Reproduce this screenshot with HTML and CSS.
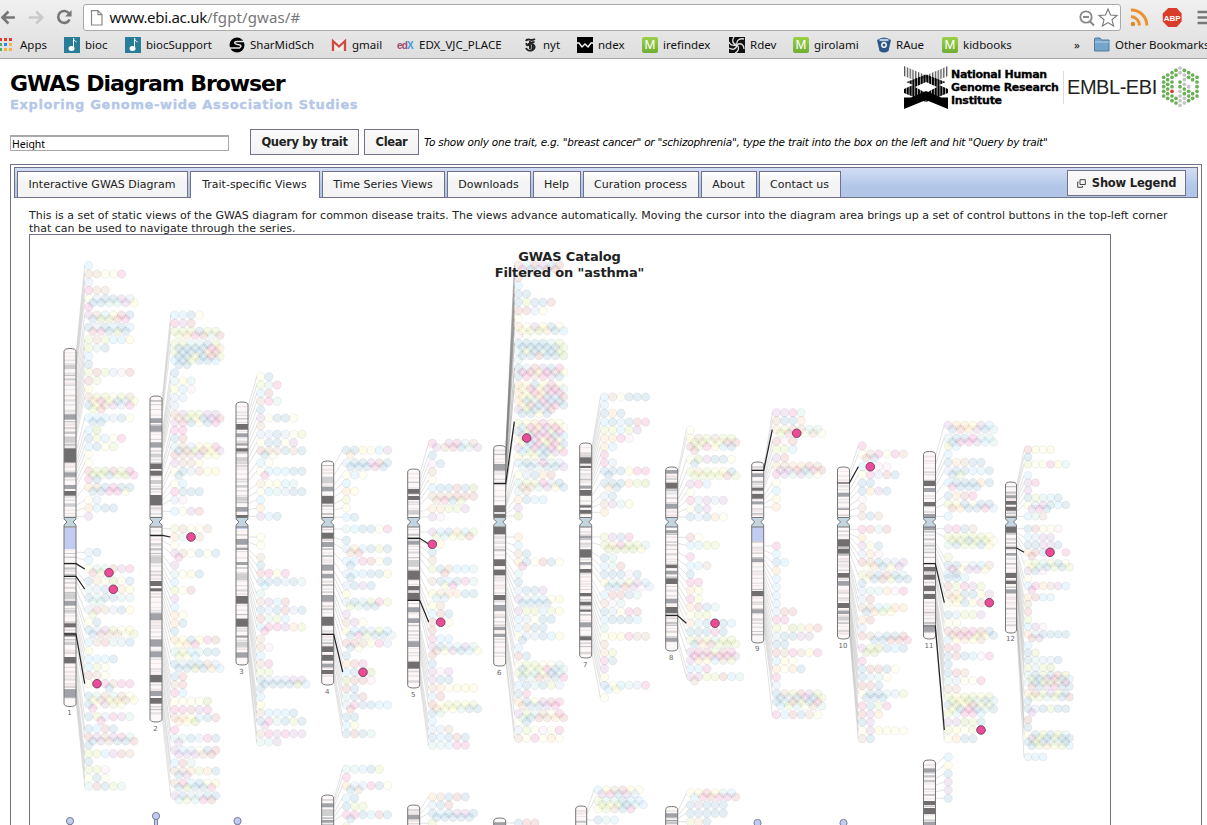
FILE: index.html
```html
<!DOCTYPE html>
<html lang="en">
<head>
<meta charset="utf-8">
<title>GWAS Diagram Browser</title>
<link rel="stylesheet" href="styles.css">
</head>
<body>
<div class="chrome">
  <div class="nav">
    <svg class="nav-icons" width="83" height="34" viewBox="0 0 83 34" fill="none">
      <path d="M15 17.500H3M8.500 11.500L2.500 17.500L8.500 23.500" stroke="#767676" stroke-width="2.600"/>
      <path d="M29 17.500H42M36.500 11.500L42.500 17.500L36.500 23.500" stroke="#cbcbcb" stroke-width="2.600"/>
      <path d="M69.500 13.500A6 6 0 1 0 70 19.500" stroke="#767676" stroke-width="2.600"/>
      <path d="M72 10V16.500H65.500Z" fill="#767676"/>
    </svg>
    <div class="address">
      <svg width="14" height="16" viewBox="0 0 14 16"><path d="M1.500 .7H8L12 4.700V15H1.500ZM8 .7V4.700H12" fill="#fff" stroke="#888" stroke-width="1.200"/></svg>
      <span class="url">www.ebi.ac.uk<span class="path">/fgpt/gwas/#</span></span>
      <svg class="addr-icons" width="42" height="22" viewBox="0 0 42 22" fill="none" stroke="#888">
        <circle cx="9" cy="10" r="5.700" stroke-width="1.800"/><path d="M6 10H12M13 14.500L17 18.500" stroke-width="2"/>
        <path d="M31 2L33.500 8L40 8.500L35 12.800L36.600 19L31 15.600L25.400 19L27 12.800L22 8.500L28.500 8Z" stroke="#777" stroke-width="1.100"/>
      </svg>
    </div>
    <svg width="87" height="34" viewBox="0 0 87 34" fill="none">
      <g stroke="#ee9231" stroke-width="3"><path d="M10 16.500A9 9 0 0 1 18.500 25.500M10 10A15.500 15.500 0 0 1 26 25.500"/></g><circle cx="12" cy="24" r="2.200" fill="#e88420"/>
      <path d="M47.500 8H56L61 13.500V21.500L56 27H47.500L42 21.500V13.500Z" fill="#d93c2b"/>
      <text x="51.500" y="20.700" class="abp">ABP</text>
      <path d="M77 12H87M77 17.500H87M77 23H87" stroke="#777" stroke-width="2.400"/>
    </svg>
  </div>
  <div class="bookmarks">
    <span class="bm"><svg width="15" height="16" viewBox="1 0 15 16"><path fill="#e5392f" d="M0 1h3v3H0zM5 1h3v3H5zM10 1h3v3h-3z"/><path fill="#4caf60" d="M0 6h3v3H0z"/><path fill="#2e86e8" d="M5 6h3v3H5z"/><path fill="#f2b33c" d="M10 6h3v3h-3zM5 11h3v3H5zM10 11h3v3h-3z"/><path fill="#4caf60" d="M0 11h3v3H0z"/></svg>Apps</span>
    <span class="bm"><svg width="16" height="16" viewBox="0 0 16 16"><path fill="#287d99" d="M0 0h16v16H0z"/><ellipse cx="7.500" cy="11.500" rx="3" ry="2.500" fill="#fff"/><path d="M9.500 12V1C10 4 11 4 12.500 5" stroke="#fff" fill="none"/></svg>bioc</span>
    <span class="bm"><svg width="16" height="16" viewBox="0 0 16 16"><path fill="#287d99" d="M0 0h16v16H0z"/><ellipse cx="7.500" cy="11.500" rx="3" ry="2.500" fill="#fff"/><path d="M9.500 12V1C10 4 11 4 12.500 5" stroke="#fff" fill="none"/></svg>biocSupport</span>
    <span class="bm"><svg width="16" height="16" viewBox="0 0 16 16"><circle cx="8" cy="8" r="7.500"/><path d="M16 4.500H8Q5 4.500 6 6.500Q7 7.500 11 8Q13 9 10.500 11H0" stroke="#e8e8e8" stroke-width="1.500" fill="none"/></svg>SharMidSch</span>
    <span class="bm"><svg width="16" height="16" viewBox="0 0 16 16"><path d="M1 3H15V14H1Z" fill="#eee"/><path d="M2 14V4L8 9.500L14 4V14" fill="none" stroke="#d04c40" stroke-width="2.300"/></svg>gmail</span>
    <span class="bm"><svg width="17" height="16" viewBox="0 0 17 16"><text x="0" y="12" class="edx">ed<tspan fill="#3a9ee0">X</tspan></text></svg>EDX_VJC_PLACE</span>
    <span class="bm"><svg width="14" height="16" viewBox="0 0 14 16" fill="none" stroke="#222"><path d="M2 4C3 0 7 5 11 2M2.500 6C2 9 5 9 5 6M10.500 5C6 5 7 7 10 8M10 8C13 13 4 16 2 11M6 4V12M8.500 7V12" stroke-width="1.900"/></svg>nyt</span>
    <span class="bm"><svg width="16" height="16" viewBox="0 0 16 16"><path d="M0 0h16v16H0z"/><path d="M0 6H2L5 10L8 7L11 10L14 6H16" fill="none" stroke="#fff" stroke-width="1.300"/></svg>ndex</span>
    <span class="bm"><span class="m-icon">M</span>irefindex</span>
    <span class="bm"><svg width="16" height="16" viewBox="0 0 16 16"><path fill="#111" d="M0 0h16v16H0z"/><g fill="none" stroke="#ddd" stroke-width="1.300"><path d="M8 8C3 7 3 3 5 0M8 8C7 3 11 1 15 2M8 8C12 5 15 8 15 12M8 8C11 11 9 15 6 16M8 8C7 13 3 13 0 11M8 8C4 9 1 8 0 5"/></g></svg>Rdev</span>
    <span class="bm"><span class="m-icon">M</span>girolami</span>
    <span class="bm"><svg width="14" height="16" viewBox="0 0 14 16"><path d="M0 3Q7 -2 14 3L11.500 14Q7 17 2.500 14Z" fill="#2c5688"/><ellipse cx="7" cy="3" rx="5" ry="1.300" fill="#b9cbe0"/><circle cx="7" cy="8" r="2.200" fill="#2c5688" stroke="#fff" stroke-width="1.400"/></svg>RAue</span>
    <span class="bm"><span class="m-icon">M</span>kidbooks</span>
    <span class="bm">»</span>
    <span class="bm other"><svg width="16" height="16" viewBox="0 0 16 16"><path d="M.5 2Q.5 1 2 1H6L7.500 3H15V14H.5Z" fill="#75a5ca" stroke="#4f7ba0"/><path d="M1 5H15" stroke="#b9d4e8"/></svg>Other Bookmarks</span>
  </div>
</div>

<header class="header">
  <div>
    <h1>GWAS Diagram Browser</h1>
    <p class="tagline">Exploring Genome-wide Association Studies</p>
  </div>
  <div class="logos">
    <svg width="44" height="44" viewBox="0 0 44 44">
      <defs><pattern id="fine" width="2.800" height="4" patternUnits="userSpaceOnUse"><path d="M0 0h1.300v4H0z" fill="#555"/></pattern>
      <pattern id="thick" width="2.800" height="4" patternUnits="userSpaceOnUse"><path d="M0 0h2.200v4H0z"/></pattern></defs>
      <path d="M0 0L26 11L12 15L0 10Z" fill="url(#fine)"/><path d="M44 0L18 11L32 15L44 10Z" fill="url(#fine)"/>
      <path d="M0 17L22 8.500L44 17V27L22 36L0 27ZM11 21L22 27L33 21L22 16Z" fill="url(#thick)" fill-rule="evenodd"/>
      <path d="M0 15L9 19L0 23ZM44 15L35 19L44 23Z" fill="#fff"/>
      <path d="M0 31H8L22 25L36 31H44V43L22 34L0 43Z" fill="#000"/><path d="M0 28L8 31.500H0ZM44 28L36 31.500H44Z" fill="#fff"/>
    </svg>
    <strong class="nhgri">National Human<br>Genome Research<br>Institute</strong>
    <span class="embl">EMBL-EBI</span>
    <svg id="hex" width="42" height="44" viewBox="1087 200 126 132"></svg>
  </div>
</header>

<form class="query">
  <input class="trait" value="Height">
  <button type="button" class="btn btn-query">Query by trait</button>
  <button type="button" class="btn btn-clear">Clear</button>
  <em class="hint">To show only one trait, e.g. "breast cancer" or "schizophrenia", type the trait into the box on the left and hit "Query by trait"</em>
</form>

<main class="panel">
  <nav class="tabs">
    <a class="tab t1"><span>Interactive GWAS Diagram</span></a>
    <a class="tab t2 active"><span>Trait-specific Views</span></a>
    <a class="tab t3"><span>Time Series Views</span></a>
    <a class="tab t4"><span>Downloads</span></a>
    <a class="tab t5"><span>Help</span></a>
    <a class="tab t6"><span>Curation process</span></a>
    <a class="tab t7"><span>About</span></a>
    <a class="tab t8"><span>Contact us</span></a>
    <button type="button" class="btn legend"><svg width="9" height="9" viewBox="0 0 9 9" fill="none" stroke="#444"><path d="M3 .7H8.300V5.500H3ZM1.500 3H.7V8.300H5.500V7"/></svg>Show Legend</button>
  </nav>
  <p class="intro">This is a set of static views of the GWAS diagram for common disease traits. The views advance automatically. Moving the cursor into the diagram area brings up a set of control buttons in the top-left corner<br>that can be used to navigate through the series.</p>
  <div class="diagram"><svg id="map" width="1080" height="590" viewBox="30 235 1080 590"></svg></div>
</main>
<script src="diagram.js"></script>
</body>
</html>
```
FILE: styles.css
```css
* { box-sizing: border-box; }
body { margin: 0; height: 825px; overflow: hidden; background: #fff; font-family: "DejaVu Sans", Verdana, sans-serif; color: #222; }
.chrome { height: 59px; border-bottom: 1px solid #a8a8a8; background: linear-gradient(#f0f0f0, #dedede); overflow: hidden; }
.nav { display: flex; height: 34px; }
.address { display: flex; align-items: center; width: 1038px; height: 27px; margin-top: 4px; padding-left: 6px; flex: none; background: #fff; border: 1px solid #aaa; border-radius: 3px; }
.url { margin-left: 6px; margin-top: -2px; font: 15px/24px "Noto Sans", sans-serif; letter-spacing: -.3px; color: #111; }
.path { color: #777; letter-spacing: .1px; }
.addr-icons { margin-left: auto; margin-right: 1px; }
.abp { font: bold 8px "Liberation Sans", sans-serif; fill: #fff; text-anchor: middle; }
.bookmarks { display: grid; grid-template-columns: 64px 61px 104px 102px 66px 127px 53px 65px 87px 64px 84px 65px 132px 20px 130px; font: 11.5px/22px "Noto Sans", sans-serif; color: #111; }
.bm { display: flex; align-items: center; gap: 5px; height: 22px; white-space: nowrap; }
.bm svg { flex: none; }
.other { letter-spacing: -.08px; }
.edx { font: bold 10px "Liberation Sans", sans-serif; fill: #9c4a70; letter-spacing: -.8px; }
.m-icon { width: 16px; height: 16px; border-radius: 2px; background: linear-gradient(#9bd046, #6fad33); color: #fff; font: 13px/16px "Liberation Sans", sans-serif; text-align: center; }
.header { display: flex; justify-content: space-between; height: 69px; padding: 7px 4px 0 10px; }
h1 { margin: 4px 0 0; font-size: 22px; line-height: 28px; letter-spacing: -1.1px; color: #000; }
.tagline { margin: 0; font-size: 13px; line-height: 14px; font-weight: bold; letter-spacing: .63px; color: #b4c7e9; -webkit-text-stroke: .3px #b4c7e9; }
.logos { display: flex; align-items: flex-start; }
.nhgri { width: 112px; margin-left: 3px; padding-top: 2px; font: 900 11px/13px "DejaVu Sans", sans-serif; letter-spacing: -.28px; color: #000; white-space: nowrap; -webkit-text-stroke: .3px #000; }
.embl { width: 98px; height: 33px; margin-top: 5px; padding-left: 3px; border-left: 1px solid #ddd; font: 20px/33px "Liberation Sans", sans-serif; letter-spacing: -.45px; color: #222; }
.query { display: flex; align-items: center; height: 28px; padding-left: 10px; }
.trait { width: 219px; height: 16px; margin: 2px 21px 0 0; padding: 0 1px; border: 1px solid #aaa; border-top: 2px solid #aaa; font: 10.500px "Noto Sans", sans-serif; color: #000; }
.btn { height: 26px; padding: 0; border: 1px solid #71718a; background: linear-gradient(#fafafa, #f3f3f3); font: bold 11.500px "DejaVu Sans", sans-serif; letter-spacing: -.2px; color: #222; }
.btn-query, .btn-clear { margin-bottom: 1px; letter-spacing: -.35px; }
.btn-query { width: 109px; margin-right: 5px; }
.btn-clear { width: 55px; }
.hint { margin-left: 5px; font-size: 10.500px; letter-spacing: -.235px; color: #000; white-space: nowrap; }
.panel { width: 1192px; height: 670px; margin: 8px 0 0 10px; padding: 2px 3px 0 3px; border: 1px solid #71718a; }
.tabs { display: flex; align-items: flex-end; gap: 2px; height: 31px; padding-left: 2px; border: 1px solid #71718a; background: linear-gradient(#d3def4, #b2c6e8 65%); }
.tab { display: flex; justify-content: center; height: 26px; border: 1px solid #71718a; border-bottom: 0; background: linear-gradient(#fff, #f4f4f4 40%); font-size: 11px; line-height: 25px; white-space: nowrap; }
.active { background: #fff; height: 27px; margin-bottom: -1px; line-height: 26px; }
.t1 { width: 171px; } .t2 { width: 130px; } .t3 { width: 123px; } .t4 { width: 84px; } .t5 { width: 48px; } .t6 { width: 116px; } .t7 { width: 56px; } .t8 { width: 82px; }
.tab span { margin-left: -1px; }
.legend { display: flex; align-items: center; justify-content: center; gap: 6px; width: 119px; height: 26px; margin: 0 11px 1px auto; }
.intro { margin: 11px 0 0 15px; font-size: 11px; line-height: 13px; letter-spacing: -.007px; white-space: nowrap; }
.diagram { width: 1082px; height: 592px; margin: -1px 0 0 15px; border: 1px solid #71718a; }
.diagram svg { display: block; }
.label { font: 7px "DejaVu Sans", sans-serif; fill: #666; text-anchor: middle; }
.title { font: bold 13px "DejaVu Sans", sans-serif; letter-spacing: -.15px; fill: #222; text-anchor: middle; }
```
FILE: diagram.js
```javascript
const palette = { b:'#5c9cc0', s:'#7fd0f8', p:'#e0509f', r:'#cc6666', t:'#c9957c', l:'#b678c0', g:'#c0e070', G:'#a0c040', w:'#f6f6b4', y:'#f8f080', o:'#f8b870', m:'#98d8d0', v:'#a0c0e8', k:'#f0c8e0' };

// number: [left, top, bottom, label y, width]
const chromosomes = {
  1:[64,348.5,706.5,715], 2:[150,396,722,731], 3:[236,402,665,674], 4:[321.7,461,685,694], 5:[407.7,469,688,697],
  6:[493.7,445.500,666,675], 7:[579.700,443,658,667], 8:[665.700,467,651,660], 9:[751.700,462,643,651],
  10:[837.500,467,639,648], 11:[923.500,451.500,639,648], 12:[1005.500,482,633,641,11],
  16:[321.7,795,900], 17:[407.7,805,900], 18:[493.7,818,900], 19:[575.7,806,900,0,11], 20:[665.7,806.500,900], 23:[923.500,760,900]
};

// Each section holds bands and trait rows in thirds of a pixel from its origin.
// A slash starts a staggered row half a step lower.
const sections = [
{ o:[30,240],
  bands:{1:'k625-668 k753-767 m523-539 m697-710 m735-747 l375-387 l415-420 l590-608 l790-800', 2:'k671-687 k692-707 k765-796 m535-549 m558-575 m607-623 l641-652 l720-732 l744-750', 3:'k552-569 k625-635 m580-591 m610-617 m801-815 k825-836 l652-665 l735-742 l770-782'},
  rows:{
  1:'77s 102ttwwp 127v 151ptt 176wvbblv/bbmmly/p 225ltsyrb/bGGrp 262bvbsbs/rpbGb 299gtgssy 324gmb 349s 373b 397grgvkr 422rg 447y 471tggwgt/opybvy/bytlvp/gr 534sssvbw/bb 571sG 595bgswp 620sbwg 643w 669w 693rgGrgp/ggbgGp/pb 742otbpbb/bbppy 780wv 804osbb 829l',
  2:'225ssbw 250plr 274gggbgg/goprmr 312ggmmbg/bbbbpo/gbbbor/bbybrg/sbgbbs/bb 398b 423mym 448ysk 473vv 497v 523tlggll/ogyblr/lpbwbp 571pp 595br 620mtvyyp/btgryl/rttlyy 669ltty 694wbvtyy/b 731ws 755pbbb 780vk 814swlr 866gtwwt',
  3:'410wb 435gmp 460sr 484tpm 509b 534lwbbw 558t 583vvbvwg 608wbbwl 632rttbtb/bw 669sw 694wsssbb/p 731owysm 755wsmvbb 780s 804o 829lsb'} },
{ o:[30,530],
  bands:{1:'k280-292 k308-319 k381-400 m213-227 m478-503 l80-84 l190-207 l240-248 l335-345', 2:'k153-168 k175-184 k435-457 k504-521 m250-271 m328-350 m364-382 m483-498 l40-46 l80-100', 3:'m27-44 m96-105 m54-60 k198-221 k266-290 m317-323 m367-383 l130-150 l335-350'},
  rows:{
  1:'67vb 91s 116wmmrlp/rgy 153bowGwb 178mvbkoy 203bmbbmm/mm 240vrtvby/g 276wb 300bvlgwy/brttwg 337strmvb 362y 387sssb 411sgw 436rtw 461wtptpp/__b 498bmtmtw/ytyoty/bwlgy/p 560bgvplm/_p 596bsrb 621rltlpm/bltbbr/b 671ggslrt 695b 719ggk 744wbw 769mrbgm',
  2:'21omwt 46w 70ltwbwb/p 106l 132mwyb 157s 181gwr 206l 231s 255ow 280ob 304b 330oybypr/yop 366mgsmbb/gys 403bvbbtv/bbGbos 440br 464tr 489ps 514wwwwG 539pprlp 563toysbr/oyG 600p 625mmbvpb/l 661lsvwbr/llltr 699srm 723ttogob/bl 760tpsbwy/bGbbp 797lbvvbb/mgmpr',
  3:'21w 46w 82t 106b 130rpyp 155bbbvbm/s 191m 216tlsr 241bvbrvb 266rmgs 291spplog/p 327t 352tk 377s 401tp 426gg 450bvvvll/bbbbGs/b 500s 525y 549tsssb 574bpmbgb/l 611tplpll 636mml'} },
{ o:[310,420],
  bands:{4:'k228-251 k338-356 k590-617 k679-696 k705-722 m200-214 m366-381 m434-452 m462-475 m525-545 k750-762 l170-190 m731-742', 5:'k207-221 k228-240 k452-479 k498-511 k519-541 m362-374 m562-577 m595-609 m664-681 k725-746 l270-280 l420-440', 6:'k256-276 k282-292 k320-343 k418-438 k449-465 m132-152 k525-540 m555-573 m621-630 m641-651', 7:'k112-131 k138-144 m197-206 k210-227 k256-263 k270-281 m348-354 k388-413 m426-434 k447-458 k519-529 k545-556 k569-575 m607-622 k649-661', 16:'m1150-1162 l1170-1188 m1200-1208', 17:'m1184-1198 l1210-1212', 18:'m1207-1215'},
  rows:{
  4:'91bbywsl/o 128vbblrb/bbbpb 165wsw 190s 214oy 239g 264w 292sb 327msbbwp 361b 386vosbgb/tr 424ssprwb/b 461vssbby/b 497vblb 522y 546vbmgpg/gmbb 583l 607tlw 633ysbvgs/bpgbbm 670rrtypv/bw 707b 731orp 757sboG 781Grrk 806rb 830mbr 855vpbbss/r 891bb 916sy 941brbm',
  5:'70p_lpmt/ltrbml 106b 131kb 155t 180w 204sbbrbG 229tttrrr/tpbg 266ooggl 291lk 336lsbosg/gmygr 373ry 397b 421t 447gbtssm/_r 484tbsbpm/_yp 521yooobb/ss 557yt 581srb 607rbw 631r 656pss 680lbvmlm/tylbsy/r 731b 755lkl 779lbb 804towyyy 829vr 854rwggyg/oyymbb/bm 903s 928vvt 952bsbrb 976mmspp',
  6:'128sbvpmv/mbmbbl 165wvbor 189mggpvb/ttmlyb/mt 239obss 263l 288G 351o 376s 401tb 426obwrbw/p 461m 486b 511vbbl 537lmsswy/bbbb 573lggsgy 598svwbb 623stbb 648wvvbsy/b 684s 708rb 735wggwwm/bwgpbm/ggmwbm/bmrtbp 796sbmbgv 821bp 845obylrp/tbblp 881lgmtwp/mbrtor/wb 931vgwkwp 955twpwow',
  16:'1048mmsbg 1072p 1097ovvpbw/bt 1134sb 1159bgg 1184ppbsrb/b 1220g', 17:'1131otbrb 1155vbr 1180bsbllb/bbbbb 1210g', 18:'1209brr'} },
{ o:[570,380],
  bands:{8:'m270-281 k308-326 k554-564 k595-612 k681-700 m372-386 m451-459 m572-583 m656-670 m773-785', 9:'k323-332 k342-356 k633-648 m280-291 m364-373 m535-546 m688-700', 20:'m1300-1313 m1320-1324'},
  rows:{
  7:'51stwbbb 75s 100bob 126sbvbrp 150ggsgl 175oopk 200os 224p 248pv 273bbbypp/b 310bbbogG/ob 348vb 372tlmy 397o 471glbp 495gopggm/GGGGy 533bm 558smr 583bbbkb 608ymmgls/bbrlkv 645srrbm 670tkm 695bvwpr 719sbbbs 744m 769wyyptt 793t 818og 842pb 866l 892y 916bwsmvp/sy 953w',
  8:'151w 175ytgtgg/ggwyrr/rgpysb/r 238wGlbbw/b 275gogyyb/ggggrg 312lps 337w 361pvlvl 386wbl 411bvbow 472rw 496ssgg 530p 557sst 583b 607pp 631oy 657py 681orbm 705wgg 730omb_bs 755bbbpb 780gtgmgg/borgGg 816lprgrp/plpppl/loystg 866ssp 890llggrsm/t',
  9:'98llpm 122tbbo 148ogrtmm/grywtw 184rkr 208ggs 234lr 258otoort/llrbpr/plmlmw 308w 332s 357y 381o 498p 522s 547bs 572o 597s 622s 647s 671s 695vrr 719pp 744gwGgor 769vbbll 793bb 818rtptyp 843syw 867owob 892p 916v 941btgrlg/bvblbg/bmrgbp/sgmwtm 1004psrbtw',
  19:'1230sytryw/lpbls 1262gmmbss/gygbms/ygtbp 1320bms', 20:'1239wyryms/sprppr 1275blbbb 1300bbbbb 1325gob'} },
{ o:[820,400],
  bands:{10:'m278-290 k418-440 k446-461 k519-533 k609-624 m543-557 m325-330 m632-642 l650-660', 11:'k242-258 m264-276 k306-318 m342-354 m377-390 k501-514 k524-539 k557-573 k582-597 m681-695', 12:'m286-295 k303-314 k321-332 m348-353 k374-398 k519-534 k542-552 m568-580 m459-467', 23:'m1105-1116 k1203-1215 k1224-1242 m1265-1275'},
  rows:{
  10:'138p 162wtpwpt/rb 200sskk 224wpvrb 249bb 273bolb 298k 323t 348tbt 388prmr 413o 437lyb 463vok 487rtbvvl/wobyl 525gtbrbm/wbrgbb/b 573vmmokp 598vr 623ttsmoo/bogy 660or 684v 708rtvbbr/_bbrrp 745lgGbsb/GG 783p 807brrbw 831bvmw 857rrb 881wbbmvg/bbb 918pbgp 943rlo 967bl 992wlywww 1016tb',
  11:'76looyls/brolbm 114mbbpmm/bpplsm/gs 163s 187botbb 212vbbssb/bg 248sbbbob/pbbb 287borp 312gybwbb/robbpv 349s 386lpbt 410gggggy/ggbggw/mbggby 472g 496bbwvst/pwlly/sb 534bbs 559rgplg 583tobbyl/oy 608wybyrs 644bvggl 669ww 694rrrprb/tppgyb/syoyt 744rp 768brbskp 793b 818brt 842mvwwp 867tt 890gyggyg/gyGmbs/bGyryg/ybpbmb/gmpps 966llGgb 990gywgg 1016wobb',
  12:'149rywy 171b 193gwwpym 226s 248lp 271l 293bgmsb 315wvlbsb/lpb 349smt 386brwwk 412svll 435bbllb 457orbp_p/r 490wgmgbw/ymbgbg/lbk 535w 558spotls/p 592orss 612t 635r 659g 680slk 703ovbbbb/rl 736s 758bg 780bmvvb 803gvgG 825mbgbrg/gblpbs/mbgggp/rblpbb 880orglgb/ggmgbr/b 926bvbgbb/l 960r 982b 1003wbgbgm/lgbgbb/bGbsmb/bgoygs 1071vss',
  23:'1071s 1096y 1121b 1146l 1170l 1195b'} },
{ o:[480,240],
  rows:{
  6:'76tmrlbr/pbvrr 113r 137s 162bb 187bgbbr 212rrvw 236w 260owlybw/ygGobs/kw 310bbbbmg/bbbbbg/mybmbg/bbrbbG/m 384bvrlbp/prypty/bptplb 434oybyrw/ypylpm/owpopp/ygobsr/obmpbb/yrblpb/lgbvr/bbyb 550gyopoy/spolpw/bgrlgp/lbppbs/yvlyrw/ybpgpb/lspbpy/sgmblp/ywybw'} }
];

const SPLIT = 522, dots = {};
const fmt = n => n.toFixed(1);
let seed = 11;
const rand = () => (seed = (seed * 16807) % 2147483647) / 2147483647;
const dotX = id => id == 12 ? 1028 : id == 19 ? 598 : chromosomes[id][0] + 24.700;

let circles = '', bandMarks = '', links = '';
for (const s of sections) {
  for (const id in s.rows) {
    const step = id == 12 ? 7.550 : 8.230, r = id == 12 ? 3.900 : 4.200;
    for (const item of s.rows[id].split(' ')) {
      const y0 = s.o[1] + parseInt(item) / 3;
      (dots[id] = dots[id] || []).push(y0);
      item.replace(/^\d+/, '').split('/').forEach((line, k) => {
        [...line].forEach((c, i) => {
          if (c !== '_') circles += `<circle cx="${fmt(dotX(id) + i * step + (k % 2) * step / 2)}" cy="${fmt(y0 + k * step / 2)}" r="${r}" fill="${palette[c]}"/>`;
        });
      });
    }
  }
  for (const id in s.bands || {}) {
    const [x,,,,w = 12] = chromosomes[id];
    for (const b of s.bands[id].split(' ')) {
      const [a, z] = b.slice(1).split('-').map(n => s.o[1] + n / 3);
      bandMarks += `<rect x="${x}" y="${fmt(a)}" width="${w}" height="${fmt(z - a)}" fill="${{k:'#716e70', m:'#a0a2a7', l:'#cfcfd1'}[b[0]]}"/>`;
    }
  }
}

for (const id in dots) {
  const [x, top, bottom,, w = 12] = chromosomes[id];
  for (const rows of [dots[id].filter(y => y < SPLIT || top > SPLIT), dots[id].filter(y => y >= SPLIT && top < SPLIT)]) {
    if (!rows.length) continue;
    const a = Math.min(...rows), z = Math.max(...rows), upper = a < SPLIT || top > SPLIT;
    const from = upper ? top + 5 : a, to = upper ? Math.max(z, top + 6) : bottom - 6;
    for (const y of rows) {
      const sy = from + (y - a) / (z - a || 1) * (to - from);
      links += `<path d="M${x + w} ${fmt(sy)}L${dotX(id) - 4} ${fmt(y)}" stroke-opacity="${id == 6 && y < 430 ? .55 : .27}"/>`;
    }
  }
}

let bodies = '', outlines = '', labels = '';
for (const id in chromosomes) {
  const [x, top, bottom, ly, w = 12] = chromosomes[id];
  bodies += `<rect x="${x}" y="${top}" width="${w}" height="${bottom - top}" rx="4" fill="#fdf8f8"/>`;
  for (let y = top + 4; y < bottom - 6; y += 2.200 + rand() * 3.600) {
    bodies += `<rect x="${x}" y="${fmt(y)}" width="${w}" height="${fmt(.7 + rand() * 1.800)}" fill="${['#ddd6d8', '#e3e1e3', '#c5c5c8', '#efe4e6'][Math.floor(rand() * 4)]}"/>`;
  }
  const R = x + w;
  if (top < SPLIT) {
    outlines += `<path d="M${x - 1} 517.500H${R + 1}V527H${x - 1}Z" fill="#fff" stroke="none"/>`;
    outlines += `<path d="M${x} 517.500H${R}V519L${R - 3} 522L${R} 525V527H${x}V525L${x + 3} 522L${x} 519Z" fill="#c3d6df"/>`;
    outlines += `<path d="M${x} 517V${top + 3}Q${x} ${top} ${x + w / 2} ${top}Q${R} ${top} ${R} ${top + 3}V517M${x} 527V${bottom - 3}Q${x} ${bottom} ${x + w / 2} ${bottom}Q${R} ${bottom} ${R} ${bottom - 3}V527"/>`;
    labels += `<text class="label" x="${x + w / 2 - .5}" y="${ly}">${id}</text>`;
  } else {
    outlines += `<path d="M${x} ${bottom}V${top + 3}Q${x} ${top} ${x + w / 2} ${top}Q${R} ${top} ${R} ${top + 3}V${bottom}"/>`;
  }
}
bandMarks += '<path d="M64 528H76V549H64ZM751.700 527H763.700V541H751.700Z" fill="#c2ccf0"/><path d="M236 527H248V529H236Z" fill="#c2ccf0"/>';

const leads = [
  [64,563.700,76,569,84.700], [64,576.300,76,589,84.700], [64,634,76,683.700,84.700], [150,535.300,162.300,537,170.300],
  [321.700,634.300,333.700,672,342.700], [407.700,538.300,419.700,544,428.700], [407.700,600.300,419.700,622,428.700], [493.700,483.700,505.700,421.700,514.300],
  [751.700,470.300,763.700,429.700,772.300], [665.700,615.300,677.300,623.300,686.300],
  [837.500,483,849.300,466.700,858.300], [923.500,563.700,935.300,602.700,944.300], [923.500,626,935.300,730,944.300], [1005.500,548,1016.700,552.300,1024]
].map(([x, y, x2, y3, x3]) => `<path d="M${x} ${y}H${x2}L${x3} ${y3}"/>`).join('');

const hits = [[109,572.700],[113.300,589.300],[97,683.700],[191,537],[363,672.300],[432.300,544.300],[440.700,622.300],[526.700,438],[796.700,433.300],[715,623.300],[870.300,466.700],[989.300,602.700],[981,730],[1050,552.300]]
  .map(([x, y]) => `<circle cx="${x}" cy="${y}" r="4.300"/>`).join('');

const knobs = [[70,821],[156,816],[237.500,821],[757.500,823],[843.500,823]]
  .map(([x, y]) => `<path d="M${x - 1.500} 826V${y}H${x + 1.500}V826"/><circle cx="${x}" cy="${y}" r="3.600"/>`).join('');

document.getElementById('map').innerHTML =
  `<g stroke="#777" stroke-width=".8" fill="none">${links}</g>` +
  `<g fill-opacity=".165" stroke="#555" stroke-opacity=".13" stroke-width=".6">${circles}</g>` +
  bodies + bandMarks + `<g fill="none" stroke="#777" stroke-width="1">${outlines}</g>` + labels +
  `<g fill="none" stroke="#222" stroke-width="1.200">${leads}</g>` +
  `<g fill="#ea4c97" stroke="#6b3350" stroke-width=".8">${hits}</g>` +
  `<g fill="#c2ccf0" stroke="#6e7390" stroke-width=".9">${knobs}</g>` +
  '<text class="title" x="569.500" y="261">GWAS Catalog</text><text class="title" x="569.500" y="277">Filtered on "asthma"</text>';

const hexColumns = {
  1095:'234g 248g 262g 276g 290g', 1107:'227g 241g 255g 269g 283g 297g', 1120:'220g 234g 248g 262g 276r 290g 304g',
  1132:'213g 227g 297g 311g', 1144:'206s 220s 248g 262g 276s 290s 304s 318s', 1157:'213g 227s 241s 255s 269g 283g 297s 311s',
  1170:'220g 234g 262s 276g 290g 304g', 1182:'227g 241g 283g 297g', 1195:'234g 248g 262g 276g 290g'
};
document.getElementById('hex').innerHTML = Object.entries(hexColumns).map(([x, col]) =>
  col.split(' ').map(d => `<circle cx="${x}" cy="${parseInt(d)}" r="5.600" fill="${{g:'#67b054', s:'#c4c4c4', r:'#e03a30'}[d.slice(-1)]}"/>`).join('')).join('');
```
